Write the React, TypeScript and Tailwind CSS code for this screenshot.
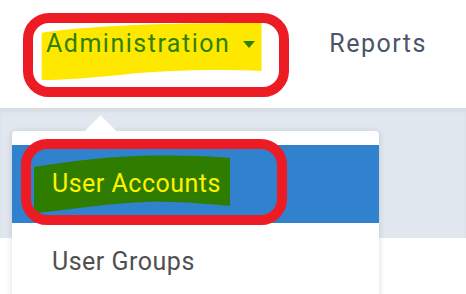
const App = () => {
  return (
    <div className="relative h-[294px] w-[466px] overflow-hidden bg-white font-['Roboto',sans-serif]">
      <nav className="relative flex h-[110px] items-start border-b-2 border-[#dadee3] bg-white pt-[29px]">
        <svg className="absolute left-0 top-0" width="466" height="108">
          <path
            d="M41.7 32.7 C 90 26, 150 23, 261.5 23 L 261.5 71 C 220 69, 160 70, 120 75 C 90 78, 60 80, 41.7 80 Z"
            fill="#ffe800"
          />
        </svg>
        <div className="relative ml-[46px] flex items-center">
          <span className="text-[25px] leading-[30px] tracking-[1.5px] text-[#2f7f00]">Administration</span>
          <svg className="ml-[13px]" width="12" height="7" viewBox="0 0 12 7">
            <path d="M0 0 L12 0 L6 7 Z" fill="#2f7f00" />
          </svg>
        </div>
        <span className="relative ml-[74px] text-[25px] leading-[30px] tracking-[1.5px] text-[#4a5568]">Reports</span>
      </nav>
      <div className="h-[128px] bg-[#e1e7ef] shadow-[inset_0_2px_3px_rgba(0,0,0,0.04)]" />

      <div className="absolute left-[12px] top-[131px] w-[367px] rounded-[4px] bg-white pt-[14px] shadow-[0_1px_6px_rgba(0,0,0,0.15)]">
        <div className="absolute left-[76.5px] top-[-11.5px] h-[23px] w-[23px] rotate-45 bg-white" />
        <div className="relative flex h-[78px] items-center bg-[#3182ce] pl-[40px]">
          <svg className="absolute left-0 top-0" width="367" height="78">
            <path
              d="M22 22 C 60 16, 100 11, 138 10.5 C 170 10.5, 200 11, 218 13 L 218 61 C 190 58, 160 56.5, 138 56.7 C 100 58, 60 64, 22 68.3 Z"
              fill="#2f7d00"
            />
          </svg>
          <span className="relative text-[25px] leading-[30px] tracking-[0.5px] text-[#fff200]">User Accounts</span>
        </div>
        <div className="flex h-[78px] items-center pl-[40px]">
          <span className="text-[25px] leading-[30px] tracking-[0.5px] text-[#505050]">User Groups</span>
        </div>
      </div>

      <div className="absolute left-[23px] top-[13px] h-[84px] w-[266px] rounded-[26px] border-[10px] border-[#ed1c24]" />
      <div className="absolute left-[21px] top-[139px] h-[86px] w-[266px] rounded-[26px] border-[10px] border-[#ed1c24]" />
    </div>
  );
};

export default App;
